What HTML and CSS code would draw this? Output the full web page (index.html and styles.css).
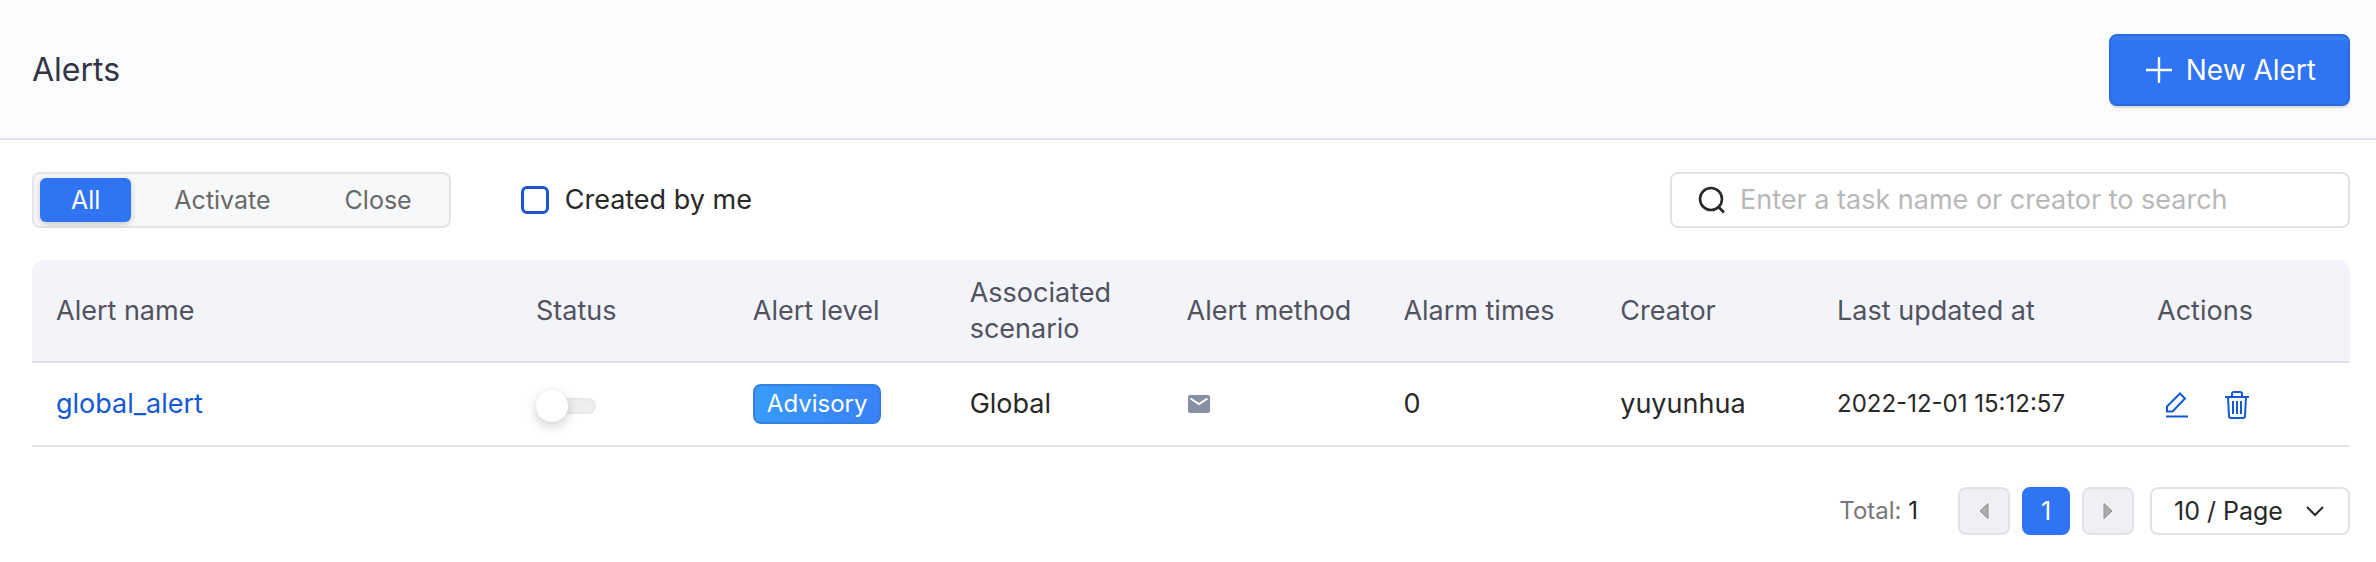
FILE: index.html
```html
<!DOCTYPE html>
<html lang="en">
<head>
<meta charset="utf-8">
<meta name="viewport" content="width=device-width, initial-scale=1">
<title>Alerts</title>
<link rel="stylesheet" href="styles.css">
</head>
<body>
<header class="page-header">
  <h1 class="page-title">Alerts</h1>
  <button class="primary-button" type="button">
    <svg class="plus-icon" viewBox="0 0 28 28" aria-hidden="true"><path d="M14 1v26M1 14h26"/></svg>
    New Alert
  </button>
</header>
<main class="content">
  <div class="toolbar">
    <div class="segmented" role="group" aria-label="Alert state">
      <button class="segment segment-active" type="button" aria-pressed="true">All</button>
      <button class="segment" type="button" aria-pressed="false">Activate</button>
      <button class="segment" type="button" aria-pressed="false">Close</button>
    </div>
    <label class="check"><input class="check-box" type="checkbox"><span>Created by me</span></label>
    <label class="search">
      <svg class="search-icon" viewBox="0 0 28 28" aria-hidden="true"><circle cx="13" cy="13" r="11"/><path d="M20 20.500l6 6"/></svg>
      <input class="search-input" type="text" placeholder="Enter a task name or creator to search" aria-label="Search alerts">
    </label>
  </div>
  <table class="alerts">
    <colgroup>
      <col class="col-name"><col><col><col><col><col><col><col class="col-date"><col>
    </colgroup>
    <thead>
      <tr>
        <th scope="col">Alert name</th>
        <th scope="col">Status</th>
        <th scope="col">Alert level</th>
        <th scope="col">Associated scenario</th>
        <th scope="col">Alert method</th>
        <th scope="col">Alarm times</th>
        <th scope="col">Creator</th>
        <th scope="col">Last updated at</th>
        <th scope="col">Actions</th>
      </tr>
    </thead>
    <tbody>
      <tr>
        <td><a class="alert-link" href="#global_alert">global_alert</a></td>
        <td><input class="switch" type="checkbox" role="switch" aria-label="Enable global_alert"></td>
        <td><span class="level">Advisory</span></td>
        <td>Global</td>
        <td><svg class="mail-icon" viewBox="0 0 22 18" role="img" aria-label="Email"><rect width="22" height="18" rx="2"/><path d="M2.500 3.500L11 9l8.500-5.500"/></svg></td>
        <td>0</td>
        <td>yuyunhua</td>
        <td class="date">2022-12-01 15:12:57</td>
        <td>
          <div class="actions">
            <button class="icon-button" type="button" aria-label="Edit">
              <svg class="action-icon" viewBox="0 0 28 28" aria-hidden="true"><path d="M4 15.500V20.500H9.500L22 7.500L17 2.500ZM3 25.500H25"/></svg>
            </button>
            <button class="icon-button" type="button" aria-label="Delete">
              <svg class="action-icon" viewBox="0 0 28 28" aria-hidden="true"><path d="M2 6H26M9 6V3Q9 1 11 1H17Q19 1 19 3V6M5 6L6 25Q6 27 8 27H20Q22 27 22 25L23 6M10 10V23M14 10V23M18 10V23"/></svg>
            </button>
          </div>
        </td>
      </tr>
    </tbody>
  </table>
  <nav class="pagination" aria-label="Pagination">
    <p class="total">Total: <span class="total-count">1</span></p>
    <button class="pager" type="button" aria-label="Previous page" disabled><svg class="arrow" viewBox="0 0 10 18" aria-hidden="true"><path d="M9 1.500V16.500L1 9Z"/></svg></button>
    <button class="pager pager-current" type="button" aria-current="page">1</button>
    <button class="pager" type="button" aria-label="Next page" disabled><svg class="arrow" viewBox="0 0 10 18" aria-hidden="true"><path d="M1 1.500V16.500L9 9Z"/></svg></button>
    <div class="page-size">
      <select class="page-size-select" aria-label="Rows per page"><option>10 / Page</option><option>20 / Page</option><option>50 / Page</option></select>
      <svg class="chevron" viewBox="0 0 18 12" aria-hidden="true"><path d="M1 2l8 8 8-8"/></svg>
    </div>
  </nav>
</main>
</body>
</html>
```
FILE: styles.css
```css
* {
  box-sizing: border-box;
}

body {
  margin: 0;
  background: #fff;
  color: #282828;
  font-family: Inter, "Liberation Sans", sans-serif;
  font-size: 27px;
  line-height: 36px;
}

button,
input,
select {
  margin: 0;
  font: inherit;
}

.page-header {
  display: flex;
  align-items: center;
  justify-content: space-between;
  padding: 34px 26px 32px 32px;
  border-bottom: 2px solid #dfe1f2;
  background: #fafbfd;
}

.page-title {
  margin: 0;
  color: #343444;
  font-size: 32px;
  font-weight: 400;
  line-height: 40px;
}

.primary-button {
  display: flex;
  align-items: center;
  gap: 13px;
  padding: 16px 32px 16px 34px;
  border: 2px solid #2b6bdc;
  border-radius: 8px;
  background: #2f74f3;
  box-shadow: 0 2px 1px rgba(0, 0, 0, 0.12), inset 0 4px 0 rgba(255, 255, 255, 0.05);
  color: #fff;
  font-size: 28px;
}

.plus-icon {
  width: 28px;
  height: 28px;
  fill: none;
  stroke: #fff;
  stroke-width: 2.4;
}

.content {
  padding: 32px 26px 27px 32px;
}

.toolbar {
  display: flex;
  align-items: center;
  margin-bottom: 32px;
}

.segmented {
  display: flex;
  gap: 12px;
  padding: 4px 6px;
  border: 2px solid #e2e4e8;
  border-radius: 8px;
  background: #f7f8fa;
}

.segment {
  padding: 0 31px;
  border: 0;
  border-radius: 6px;
  background: none;
  color: #696969;
  font-size: 25px;
  line-height: 44px;
}

.segment-active {
  background: #2f74f3;
  box-shadow: 0 2px 6px rgba(0, 0, 0, 0.2);
  color: #fff;
}

.check {
  display: flex;
  align-items: center;
  gap: 16px;
  margin-left: 70px;
}

.check-box {
  width: 28px;
  height: 28px;
  border: 3px solid #1d55cf;
  border-radius: 6px;
  background: #fff;
  appearance: none;
}

.search {
  display: flex;
  align-items: center;
  gap: 14px;
  flex: 0 1 680px;
  height: 56px;
  margin-left: auto;
  padding: 0 26px;
  border: 2px solid #e2e2e9;
  border-radius: 8px;
}

.search-icon {
  flex: none;
  width: 28px;
  height: 28px;
  fill: none;
  stroke: #282828;
  stroke-width: 2.6;
}

.search-input {
  flex: 1;
  min-width: 0;
  padding: 0;
  border: 0;
  outline: 0;
  background: none;
}

.search-input::placeholder {
  color: #b8b8b8;
}

.alerts {
  width: 100%;
  border-collapse: separate;
  border-spacing: 0;
  table-layout: fixed;
}

.col-name {
  width: 480px;
}

.col-date {
  width: 320px;
}

.alerts th,
.alerts td {
  border-bottom: 2px solid #e2e2e8;
  text-align: left;
}

.alerts th {
  padding: 15px 24px 14px;
  background: #f3f4f9;
  color: #52525f;
  font-weight: 400;
}

.alerts th:first-child {
  border-top-left-radius: 12px;
}

.alerts th:last-child {
  border-top-right-radius: 12px;
}

.alerts td {
  height: 84px;
  padding: 0 24px;
}

.alerts .date {
  font-size: 24px;
}

.alert-link {
  color: #1458d4;
  text-decoration: none;
}

.switch {
  display: flex;
  align-items: center;
  width: 60px;
  height: 16px;
  margin-top: 4px;
  border-radius: 8px;
  background: #efefef;
  box-shadow: inset 0 0 4px rgba(0, 0, 0, 0.08);
  appearance: none;
}

.switch::before {
  width: 32px;
  height: 32px;
  flex: none;
  border-radius: 50%;
  background: #fff;
  box-shadow: 0 4px 12px rgba(0, 0, 0, 0.2);
  content: "";
}

.level {
  display: inline-block;
  padding: 0 12px;
  border: 2px solid #347fdf;
  border-radius: 8px;
  background: linear-gradient(100deg, #389dfa, #3a80f8) border-box;
  color: #fff;
  font-size: 24px;
}

.mail-icon {
  display: block;
  width: 22px;
  height: 18px;
  margin-left: 1px;
  fill: #8790a3;
}

.mail-icon path {
  fill: none;
  stroke: #fff;
  stroke-width: 2;
}

.actions {
  display: flex;
  gap: 32px;
  padding-top: 2px;
  padding-left: 6px;
}

.icon-button {
  padding: 0;
  border: 0;
  background: none;
}

.action-icon {
  display: block;
  width: 28px;
  height: 28px;
  fill: none;
  stroke: #1458d4;
  stroke-width: 2;
}

.pagination {
  display: flex;
  align-items: center;
  gap: 12px;
  margin-top: 40px;
  font-size: 25px;
}

.total {
  margin: 0 28px 0 auto;
  color: #777;
  font-size: 24px;
}

.total-count {
  color: #222;
}

.pager {
  display: flex;
  align-items: center;
  justify-content: center;
  width: 52px;
  height: 48px;
  padding: 0;
  border: 2px solid #e2e3e8;
  border-radius: 8px;
  background: #eff0f3;
}

.pager-current {
  width: 48px;
  border-color: #2f74f3;
  background: #2f74f3;
  color: #fff;
}

.arrow {
  width: 10px;
  height: 18px;
  fill: #adadad;
  stroke: #8e8e8e;
}

.page-size {
  position: relative;
  margin-left: 4px;
}

.page-size-select {
  display: block;
  width: 200px;
  height: 48px;
  padding: 0 22px;
  border: 2px solid #e2e2e9;
  border-radius: 8px;
  background: #fff;
  color: #282828;
  appearance: none;
}

.chevron {
  position: absolute;
  top: 18px;
  right: 26px;
  width: 18px;
  height: 12px;
  fill: none;
  stroke: #282828;
  stroke-width: 2;
  pointer-events: none;
}
```
